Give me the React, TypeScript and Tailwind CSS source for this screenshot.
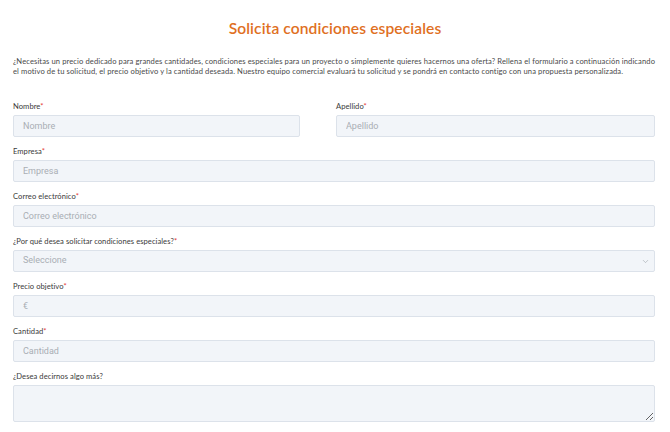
import { ChevronDown } from 'lucide-react';

const inputCls =
  "w-full h-[22px] bg-[#f2f5f9] border border-[#dce2ea] rounded-[2px] px-[9px] text-[9px] text-[#555] placeholder:text-[#a9aeb4] outline-none font-['Roboto',sans-serif]";

function Field({ label, required = true, children }: { label: string; required?: boolean; children: React.ReactNode }) {
  return (
    <div className="flex flex-col">
      <label className="text-[7.6px] leading-[9px] text-[#3a3a3a] h-[9px] mb-[4px] tracking-[0.05px]">
        {label}
        {required && <span className="text-[#e53935]">*</span>}
      </label>
      {children}
    </div>
  );
}

export default function App() {
  return (
    <div className="w-[670px] h-[432px] bg-white font-['Lato',sans-serif] overflow-hidden">
      <div className="px-[13px] pt-[17px]">
        <h1 className="text-center text-[15.6px] leading-[22px] font-semibold text-[#e0701f] tracking-[0.1px]">
          Solicita condiciones especiales
        </h1>
        <p className="mt-[17px] text-[7.6px] leading-[10px] text-[#4a4a4a] tracking-[0.1px] whitespace-nowrap">
          ¿Necesitas un precio dedicado para grandes cantidades, condiciones especiales para un proyecto o simplemente quieres hacernos una oferta? Rellena el formulario a continuación indicando
          <br />
          el motivo de tu solicitud, el precio objetivo y la cantidad deseada. Nuestro equipo comercial evaluará tu solicitud y se pondrá en contacto contigo con una propuesta personalizada.
        </p>

        <div className="mt-[26px] flex flex-col gap-[10px] pr-[2px]">
          <div className="grid grid-cols-[287px_319px] justify-between">
            <Field label="Nombre">
              <input className={inputCls} placeholder="Nombre" />
            </Field>
            <Field label="Apellido">
              <input className={inputCls} placeholder="Apellido" />
            </Field>
          </div>
          <Field label="Empresa">
            <input className={inputCls} placeholder="Empresa" />
          </Field>
          <Field label="Correo electrónico">
            <input className={inputCls} placeholder="Correo electrónico" />
          </Field>
          <Field label="¿Por qué desea solicitar condiciones especiales?">
            <div className="relative">
              <select className={inputCls + " appearance-none text-[#a9aeb4] block"} defaultValue="">
                <option value="" disabled>
                  Seleccione
                </option>
              </select>
              <ChevronDown className="absolute right-[5px] top-[7px] w-[9px] h-[9px] text-[#9aa0a6]" strokeWidth={1.5} />
            </div>
          </Field>
          <Field label="Precio objetivo">
            <input className={inputCls} placeholder="€" />
          </Field>
          <Field label="Cantidad">
            <input className={inputCls} placeholder="Cantidad" />
          </Field>
          <Field label="¿Desea decirnos algo más?" required={false}>
            <textarea className="w-full h-[37px] bg-[#f2f5f9] border border-[#dce2ea] rounded-[2px] px-[9px] text-[9px] outline-none block" />
          </Field>
        </div>
      </div>
    </div>
  );
}
